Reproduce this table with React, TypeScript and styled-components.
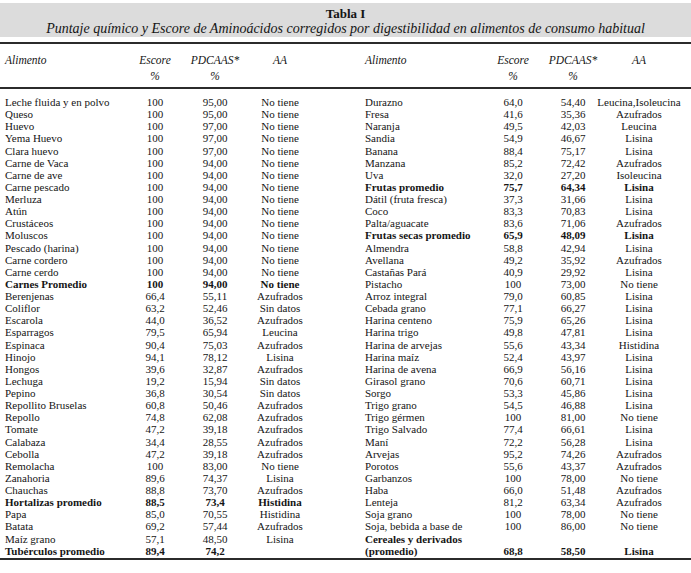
import { FC } from 'react'
import styled, { createGlobalStyle } from 'styled-components'

type Row = [string, string, string, string, boolean?]

const left: Row[] = [
  ['Leche fluida y en polvo', '100', '95,00', 'No tiene'],
  ['Queso', '100', '95,00', 'No tiene'],
  ['Huevo', '100', '97,00', 'No tiene'],
  ['Yema Huevo', '100', '97,00', 'No tiene'],
  ['Clara huevo', '100', '97,00', 'No tiene'],
  ['Carne de Vaca', '100', '94,00', 'No tiene'],
  ['Carne de ave', '100', '94,00', 'No tiene'],
  ['Carne pescado', '100', '94,00', 'No tiene'],
  ['Merluza', '100', '94,00', 'No tiene'],
  ['Atún', '100', '94,00', 'No tiene'],
  ['Crustáceos', '100', '94,00', 'No tiene'],
  ['Moluscos', '100', '94,00', 'No tiene'],
  ['Pescado (harina)', '100', '94,00', 'No tiene'],
  ['Carne cordero', '100', '94,00', 'No tiene'],
  ['Carne cerdo', '100', '94,00', 'No tiene'],
  ['Carnes Promedio', '100', '94,00', 'No tiene', true],
  ['Berenjenas', '66,4', '55,11', 'Azufrados'],
  ['Coliflor', '63,2', '52,46', 'Sin datos'],
  ['Escarola', '44,0', '36,52', 'Azufrados'],
  ['Esparragos', '79,5', '65,94', 'Leucina'],
  ['Espinaca', '90,4', '75,03', 'Azufrados'],
  ['Hinojo', '94,1', '78,12', 'Lisina'],
  ['Hongos', '39,6', '32,87', 'Azufrados'],
  ['Lechuga', '19,2', '15,94', 'Sin datos'],
  ['Pepino', '36,8', '30,54', 'Sin datos'],
  ['Repollito Bruselas', '60,8', '50,46', 'Azufrados'],
  ['Repollo', '74,8', '62,08', 'Azufrados'],
  ['Tomate', '47,2', '39,18', 'Azufrados'],
  ['Calabaza', '34,4', '28,55', 'Azufrados'],
  ['Cebolla', '47,2', '39,18', 'Azufrados'],
  ['Remolacha', '100', '83,00', 'No tiene'],
  ['Zanahoria', '89,6', '74,37', 'Lisina'],
  ['Chauchas', '88,8', '73,70', 'Azufrados'],
  ['Hortalizas promedio', '88,5', '73,4', 'Histidina', true],
  ['Papa', '85,0', '70,55', 'Histidina'],
  ['Batata', '69,2', '57,44', 'Azufrados'],
  ['Maíz grano', '57,1', '48,50', 'Lisina'],
  ['Tubérculos promedio', '89,4', '74,2', '', true],
]

const right: Row[] = [
  ['Durazno', '64,0', '54,40', 'Leucina,Isoleucina'],
  ['Fresa', '41,6', '35,36', 'Azufrados'],
  ['Naranja', '49,5', '42,03', 'Leucina'],
  ['Sandia', '54,9', '46,67', 'Lisina'],
  ['Banana', '88,4', '75,17', 'Lisina'],
  ['Manzana', '85,2', '72,42', 'Azufrados'],
  ['Uva', '32,0', '27,20', 'Isoleucina'],
  ['Frutas promedio', '75,7', '64,34', 'Lisina', true],
  ['Dátil (fruta fresca)', '37,3', '31,66', 'Lisina'],
  ['Coco', '83,3', '70,83', 'Lisina'],
  ['Palta/aguacate', '83,6', '71,06', 'Azufrados'],
  ['Frutas secas promedio', '65,9', '48,09', 'Lisina', true],
  ['Almendra', '58,8', '42,94', 'Lisina'],
  ['Avellana', '49,2', '35,92', 'Azufrados'],
  ['Castañas Pará', '40,9', '29,92', 'Lisina'],
  ['Pistacho', '100', '73,00', 'No tiene'],
  ['Arroz integral', '79,0', '60,85', 'Lisina'],
  ['Cebada grano', '77,1', '66,27', 'Lisina'],
  ['Harina centeno', '75,9', '65,26', 'Lisina'],
  ['Harina trigo', '49,8', '47,81', 'Lisina'],
  ['Harina de arvejas', '55,6', '43,34', 'Histidina'],
  ['Harina maíz', '52,4', '43,97', 'Lisina'],
  ['Harina de avena', '66,9', '56,16', 'Lisina'],
  ['Girasol grano', '70,6', '60,71', 'Lisina'],
  ['Sorgo', '53,3', '45,86', 'Lisina'],
  ['Trigo grano', '54,5', '46,88', 'Lisina'],
  ['Trigo gérmen', '100', '81,00', 'No tiene'],
  ['Trigo Salvado', '77,4', '66,61', 'Lisina'],
  ['Maní', '72,2', '56,28', 'Lisina'],
  ['Arvejas', '95,2', '74,26', 'Azufrados'],
  ['Porotos', '55,6', '43,37', 'Azufrados'],
  ['Garbanzos', '100', '78,00', 'No tiene'],
  ['Haba', '66,0', '51,48', 'Azufrados'],
  ['Lenteja', '81,2', '63,34', 'Azufrados'],
  ['Soja grano', '100', '78,00', 'No tiene'],
  ['Soja, bebida a base de', '100', '86,00', 'No tiene'],
  ['Cereales y derivados', '', '', '', true],
  ['(promedio)', '68,8', '58,50', 'Lisina', true],
]

// column sets for each half of the table
const LEFT_COLS = '123px 54px 66px 64px'
const RIGHT_COLS = '121px 54px 66px 66px'

const Table: FC = () => (
  <Page>
    <GlobalStyle />
    <Caption>
      <Title>Tabla I</Title>
      <Subtitle>
        Puntaje químico y Escore de Aminoácidos corregidos por digestibilidad en alimentos de consumo habitual
      </Subtitle>
    </Caption>
    <Head>
      <HalfHead $cols={LEFT_COLS} $offset={5} />
      <HalfHead $cols={RIGHT_COLS} $offset={53} />
    </Head>
    <Body>
      <Half $cols={LEFT_COLS} $offset={5}>
        {left.map(r => (
          <TableRow key={r[0]} row={r} />
        ))}
      </Half>
      <Half $cols={RIGHT_COLS} $offset={53}>
        {right.map(r => (
          <TableRow key={r[0]} row={r} />
        ))}
      </Half>
    </Body>
  </Page>
)

const HalfHead: FC<{ $cols: string; $offset: number }> = props => (
  <HeadGrid $cols={props.$cols} $offset={props.$offset}>
    <HeadCell $align="left">Alimento</HeadCell>
    <HeadCell $align="center">
      Escore
      <br />%
    </HeadCell>
    <HeadCell $align="center">
      PDCAAS*
      <br />%
    </HeadCell>
    <HeadCell $align="center">AA</HeadCell>
  </HeadGrid>
)

const TableRow: FC<{ row: Row }> = ({ row }) => {
  const [name, escore, pdcaas, aa, bold] = row
  return (
    <>
      <Name $bold={!!bold}>{name}</Name>
      <Num $bold={!!bold}>{escore}</Num>
      <Num $bold={!!bold}>{pdcaas}</Num>
      <Num $bold={!!bold}>{aa}</Num>
    </>
  )
}

export default Table

const GlobalStyle = createGlobalStyle`
  html, body {
    margin: 0;
    padding: 0;
    background: #fff;
  }
  body {
    font-family: "Liberation Serif", "Times New Roman", serif;
    color: #151515;
  }
`

const Page = styled.div`
  width: 691px;
  height: 573px;
  overflow: hidden;
  background: #fff;
`

const Caption = styled.div`
  margin-top: 3px;
  padding: 3px 0 1px;
  background: #dcdcdc;
  text-align: center;
`

const Title = styled.div`
  font-size: 13px;
  font-weight: bold;
  line-height: 15px;
`

const Subtitle = styled.div`
  font-size: 14px;
  font-style: italic;
  line-height: 15px;
`

const Head = styled.div`
  display: flex;
  margin-top: 5px;
  padding: 8px 0 3px;
  border-top: 2px solid #2b2b2b;
  border-bottom: 2px solid #2b2b2b;
`

const HeadGrid = styled.div<{ $cols: string; $offset: number }>`
  display: grid;
  grid-template-columns: ${p => p.$cols};
  margin-left: ${p => p.$offset}px;
  font-size: 11.5px;
  font-style: italic;
  line-height: 16px;
`

const HeadCell = styled.div<{ $align: string }>`
  text-align: ${p => p.$align};
  white-space: nowrap;
`

const Body = styled.div`
  display: flex;
  align-items: flex-start;
  padding: 7px 0 1px;
  border-bottom: 2px solid #2b2b2b;
`

const Half = styled.div<{ $cols: string; $offset: number }>`
  display: grid;
  grid-template-columns: ${p => p.$cols};
  grid-auto-rows: 12.13px;
  margin-left: ${p => p.$offset}px;
  font-size: 11px;
  line-height: 12.13px;
`

const Name = styled.div<{ $bold: boolean }>`
  font-weight: ${p => (p.$bold ? 'bold' : 'normal')};
  white-space: nowrap;
`

const Num = styled.div<{ $bold: boolean }>`
  display: flex;
  justify-content: center;
  font-weight: ${p => (p.$bold ? 'bold' : 'normal')};
  white-space: nowrap;
`
